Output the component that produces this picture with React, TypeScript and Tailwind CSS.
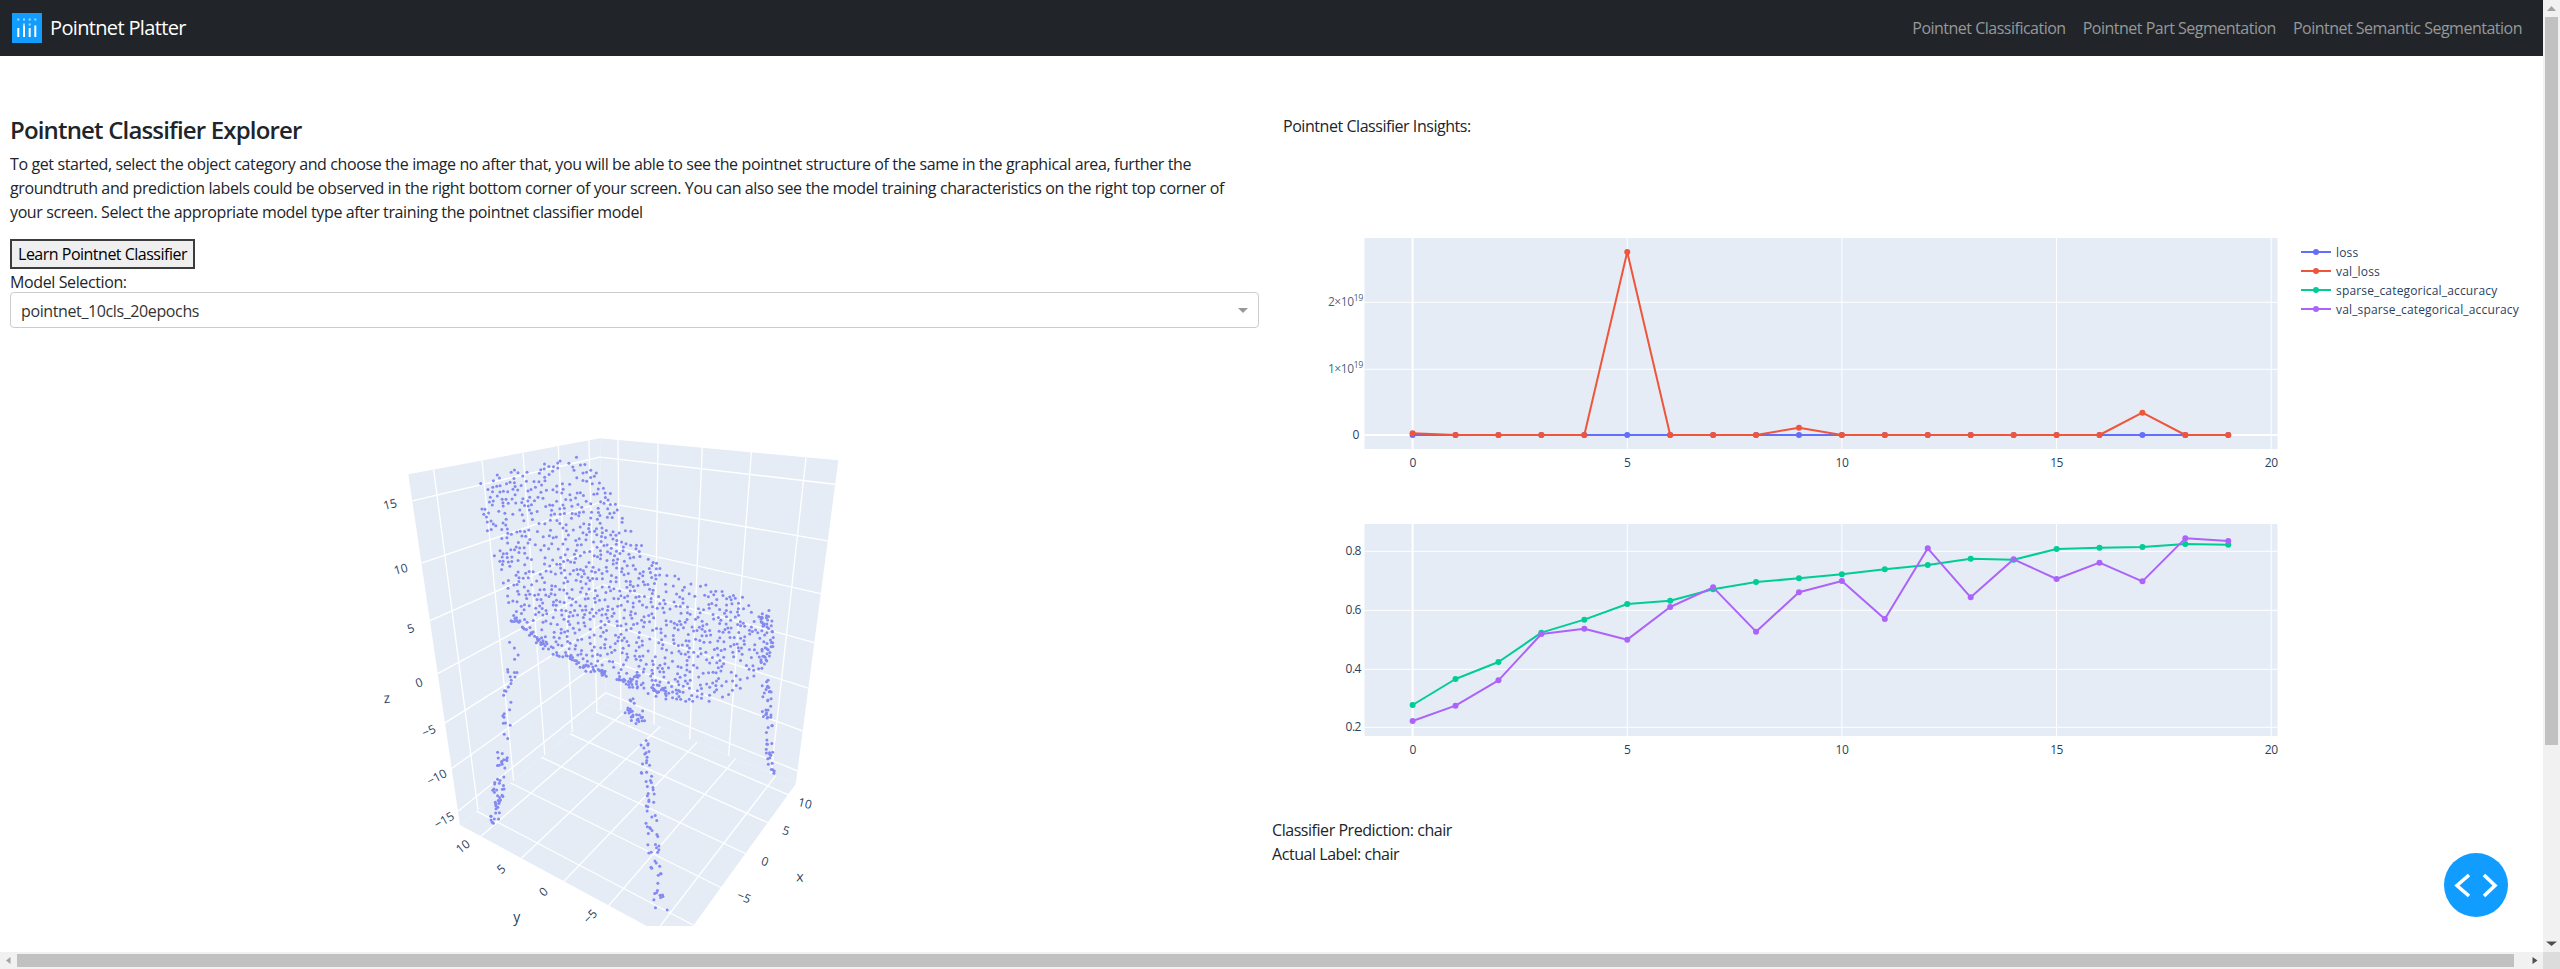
import React from 'react';

type Pt = [number, number];

// plotly default colours
const BLUE = '#636efa';
const RED = '#ef553b';
const GREEN = '#00cc96';
const PURPLE = '#ab63fa';
const TICK = '#2a3f5f';

// zoom crop coords of the 3d plot -> page coords
const crop = (x: number, y: number): Pt => [340 + x / 3, 420 + y / 2.856];

// maps the unit square onto a four cornered wall, keeps the perspective
const quadMap = (p00: Pt, p10: Pt, p11: Pt, p01: Pt) => {
  const [x0, y0] = p00;
  const [x1, y1] = p10;
  const [x2, y2] = p11;
  const [x3, y3] = p01;
  const dx1 = x1 - x2;
  const dx2 = x3 - x2;
  const sx = x0 - x1 + x2 - x3;
  const dy1 = y1 - y2;
  const dy2 = y3 - y2;
  const sy = y0 - y1 + y2 - y3;
  const den = dx1 * dy2 - dx2 * dy1;
  const g = (sx * dy2 - dx2 * sy) / den;
  const h = (dx1 * sy - sx * dy1) / den;
  const a = x1 - x0 + g * x1;
  const b = x3 - x0 + h * x3;
  const d = y1 - y0 + g * y1;
  const e = y3 - y0 + h * y3;
  return (u: number, v: number): Pt => {
    const w = g * u + h * v + 1;
    return [(a * u + b * v + x0) / w, (d * u + e * v + y0) / w];
  };
};

const Y_MAX = 12.3;
const Y_MIN = -12;
const X_MIN = -12.4;
const X_MAX = 12.7;
const Z_MAX = 17;
const Z_MIN = -16.7;
const yu = (y: number) => (Y_MAX - y) / (Y_MAX - Y_MIN);
const xu = (x: number) => (x - X_MIN) / (X_MAX - X_MIN);
const zv = (z: number) => (Z_MAX - z) / (Z_MAX - Z_MIN);

const TL = crop(205, 158);
const BACK_TOP = crop(780, 55);
const TR = crop(1495, 118);
const BL: Pt = [460, 826];
const BACK: Pt = [606, 705];
const BR: Pt = [795.7, 785];
const FRONT: Pt = [680, 945];

const leftWall = quadMap(TL, BACK_TOP, BACK, BL);
const rightWall = quadMap(BACK_TOP, TR, BR, BACK);
const floor = quadMap(BL, BACK, BR, FRONT); // u along y, v along x

const ZS = [15, 10, 5, 0, -5, -10, -15];
const YS = [10, 5, 0, -5, -10];
const XS = [-10, -5, 0, 5, 10];

const gridLines: [Pt, Pt][] = [
  ...ZS.map((z): [Pt, Pt] => [leftWall(0, zv(z)), leftWall(1, zv(z))]),
  ...ZS.map((z): [Pt, Pt] => [rightWall(0, zv(z)), rightWall(1, zv(z))]),
  ...YS.map((y): [Pt, Pt] => [leftWall(yu(y), 0), leftWall(yu(y), 1)]),
  ...XS.map((x): [Pt, Pt] => [rightWall(xu(x), 0), rightWall(xu(x), 1)]),
  ...YS.map((y): [Pt, Pt] => [floor(yu(y), 0), floor(yu(y), 1)]),
  ...XS.map((x): [Pt, Pt] => [floor(0, 1 - xu(x)), floor(1, 1 - xu(x))]),
];

// small seeded random so the cloud stays the same on every load
let seed = 20240;
const rnd = () => {
  seed = (seed * 16807) % 2147483647;
  return seed / 2147483647;
};

const inside = (p: Pt, poly: Pt[]) => {
  let hit = false;
  for (let i = 0, j = poly.length - 1; i < poly.length; j = i++) {
    const [xi, yi] = poly[i];
    const [xj, yj] = poly[j];
    if (yi > p[1] !== yj > p[1] && p[0] < ((xj - xi) * (p[1] - yi)) / (yj - yi) + xi) hit = !hit;
  }
  return hit;
};

const chairOutline: Pt[] = [
  [415, 182], [460, 158], [600, 130], [710, 108], [770, 140], [825, 225], [850, 290], [895, 345],
  [935, 400], [975, 430], [1100, 475], [1220, 510], [1290, 545], [1310, 610], [1295, 680], [1260, 730],
  [1210, 770], [1140, 800], [1080, 812], [970, 800], [880, 770], [780, 735], [720, 715], [640, 665],
  [570, 630], [520, 565], [490, 480], [460, 390], [430, 290],
];

const sampleLine = (pts: Pt[], count: number, jitter: number): Pt[] => {
  const out: Pt[] = [];
  for (let i = 0; i < count; i++) {
    const t = rnd() * (pts.length - 1);
    const k = Math.min(Math.floor(t), pts.length - 2);
    const f = t - k;
    out.push([
      pts[k][0] + (pts[k + 1][0] - pts[k][0]) * f + (rnd() - 0.5) * jitter,
      pts[k][1] + (pts[k + 1][1] - pts[k][1]) * f + (rnd() - 0.5) * jitter * 0.6,
    ]);
  }
  return out;
};

const chairCloud = (): Pt[] => {
  const pts: Pt[] = [];
  // loose spacing, the real cloud has gaps and few overlapping dots
  let tries = 0;
  while (pts.length < 1020 && tries < 60000) {
    tries++;
    const p: Pt = [400 + rnd() * 920, 100 + rnd() * 720];
    if (!inside(p, chairOutline)) continue;
    if (pts.some((q) => Math.hypot(q[0] - p[0], q[1] - p[1]) < 9)) continue;
    pts.push(p);
  }
  pts.push(...sampleLine([[520, 565], [600, 640], [720, 700], [880, 760]], 70, 26));
  pts.push(...sampleLine([[880, 730], [900, 760], [960, 770], [1000, 780]], 30, 40));
  pts.push(...sampleLine([[1270, 560], [1290, 620], [1270, 700]], 30, 34));
  pts.push(...sampleLine([[525, 640], [510, 740], [500, 830], [490, 920], [485, 990], [475, 1060], [470, 1110], [465, 1155]], 75, 36));
  pts.push(...sampleLine([[905, 900], [915, 1000], [930, 1120], [940, 1220], [950, 1300], [965, 1410]], 70, 36));
  pts.push(...sampleLine([[870, 800], [870, 860]], 18, 30));
  pts.push(...sampleLine([[900, 830], [900, 880]], 12, 30));
  pts.push(...sampleLine([[1280, 750], [1280, 830], [1285, 920], [1290, 1015]], 50, 30));
  return pts.map(([x, y]) => crop(x, y));
};

const cloud = chairCloud();

// rotated tick labels of the 3d scene, crop coords
const sceneLabels: { t: string; x: number; y: number; r: number; big?: boolean }[] = [
  { t: '15', x: 150, y: 243, r: -14 },
  { t: '10', x: 182, y: 428, r: -16 },
  { t: '5', x: 212, y: 597, r: -18 },
  { t: '0', x: 237, y: 752, r: -20 },
  { t: '−5', x: 266, y: 890, r: -24 },
  { t: '−10', x: 290, y: 1022, r: -28 },
  { t: '−15', x: 312, y: 1145, r: -30 },
  { t: '10', x: 368, y: 1220, r: -38 },
  { t: '5', x: 483, y: 1285, r: -40 },
  { t: '0', x: 610, y: 1350, r: -42 },
  { t: '−5', x: 750, y: 1420, r: -46 },
  { t: '10', x: 1395, y: 1097, r: 14 },
  { t: '5', x: 1338, y: 1175, r: 16 },
  { t: '0', x: 1275, y: 1263, r: 20 },
  { t: '−5', x: 1212, y: 1365, r: 24 },
  { t: 'z', x: 140, y: 795, r: -6, big: true },
  { t: 'y', x: 530, y: 1420, r: 0, big: true },
  { t: 'x', x: 1380, y: 1305, r: 4, big: true },
];

const Scene3D: React.FC = () => (
  <svg className="block w-[1250px] h-[598px] shrink-0" viewBox="10 329 1250 598">
    <polygon points={[TL, BACK_TOP, BACK, BL].join(' ')} fill="#e5ecf6" />
    <polygon points={[BACK_TOP, TR, BR, BACK].join(' ')} fill="#e5ecf6" />
    <polygon points={[BL, BACK, BR, FRONT].join(' ')} fill="#e5ecf6" />
    {gridLines.map(([a, b], i) => (
      <line key={i} x1={a[0]} y1={a[1]} x2={b[0]} y2={b[1]} stroke="#ffffff" strokeWidth={1.3} />
    ))}
    {cloud.map(([x, y], i) => (
      <circle key={i} cx={x} cy={y} r={1.5} fill="#8389f0" />
    ))}
    {sceneLabels.map((l, i) => {
      const [x, y] = crop(l.x, l.y);
      return (
        <text
          key={i}
          x={x}
          y={y}
          fill={TICK}
          fontSize={l.big ? 14 : 12}
          textAnchor="middle"
          dominantBaseline="central"
          transform={`rotate(${l.r} ${x} ${y})`}
        >
          {l.t}
        </text>
      );
    })}
  </svg>
);

const xPx = (i: number) => 1412.6 + i * 42.93;
const EPOCHS = Array.from({ length: 20 }, (_, i) => i);

const lossY = EPOCHS.map(() => 435);
const valLossY = EPOCHS.map((i) => {
  if (i === 0) return 433.3;
  if (i === 5) return 252;
  if (i === 9) return 427.7;
  if (i === 17) return 412.7;
  return 435;
});
const toPage2 = (v: number) => 510 + v / 3;
const accY = [585, 507, 456, 368, 329, 282, 272, 238, 216, 205, 193, 178, 165, 146, 149, 117, 113, 111, 102, 104].map(toPage2);
const valAccY = [633, 587, 511, 372, 356, 389, 291, 232, 365, 247, 213, 327, 115, 262, 148, 207, 158, 214, 85, 93].map(toPage2);

const Trace: React.FC<{ ys: number[]; color: string }> = ({ ys, color }) => (
  <g>
    <polyline
      points={ys.map((y, i) => `${xPx(i)},${y}`).join(' ')}
      fill="none"
      stroke={color}
      strokeWidth={2}
      strokeLinejoin="round"
    />
    {ys.map((y, i) => (
      <circle key={i} cx={xPx(i)} cy={y} r={3} fill={color} />
    ))}
  </g>
);

const XAxis: React.FC<{ top: number; bottom: number }> = ({ top, bottom }) => (
  <g>
    {[0, 5, 10, 15, 20].map((v) => (
      <g key={v}>
        <line x1={xPx(v)} x2={xPx(v)} y1={top} y2={bottom} stroke="#ffffff" strokeWidth={v === 0 ? 2 : 1} />
        <text x={xPx(v)} y={bottom + 18} fill={TICK} fontSize={12} textAnchor="middle">
          {v}
        </text>
      </g>
    ))}
  </g>
);

const legend = [
  { name: 'loss', color: BLUE, y: 252 },
  { name: 'val_loss', color: RED, y: 271 },
  { name: 'sparse_categorical_accuracy', color: GREEN, y: 290 },
  { name: 'val_sparse_categorical_accuracy', color: PURPLE, y: 309 },
];

const TrainingCharts: React.FC = () => (
  <svg className="block w-[1271px] h-[679px] shrink-0" viewBox="1272 138 1271 679">
    {/* loss */}
    <rect x={1364.5} y={238} width={913} height={211} fill="#e5ecf6" />
    <XAxis top={238} bottom={449} />
    {[
      { y: 369.3, label: '1×10' },
      { y: 302.3, label: '2×10' },
    ].map((t) => (
      <g key={t.label}>
        <line x1={1364.5} x2={2277.5} y1={t.y} y2={t.y} stroke="#ffffff" />
        <text x={1363} y={t.y + 4} fill={TICK} fillOpacity={0.85} fontSize={12} textAnchor="end">
          {t.label}
          <tspan dy={-5} fontSize={9}>
            19
          </tspan>
        </text>
      </g>
    ))}
    <line x1={1364.5} x2={2277.5} y1={435} y2={435} stroke="#ffffff" strokeWidth={2} />
    <text x={1359} y={439} fill={TICK} fontSize={12} textAnchor="end">
      0
    </text>
    <Trace ys={lossY} color={BLUE} />
    <Trace ys={valLossY} color={RED} />

    {legend.map((l) => (
      <g key={l.name}>
        <line x1={2301} x2={2331} y1={l.y} y2={l.y} stroke={l.color} strokeWidth={2} />
        <circle cx={2316} cy={l.y} r={3} fill={l.color} />
        <text x={2336} y={l.y + 5} fill={TICK} fontSize={12} letterSpacing={0.16}>
          {l.name}
        </text>
      </g>
    ))}

    {/* accuracy */}
    <rect x={1364.5} y={524} width={913} height={212} fill="#e5ecf6" />
    <XAxis top={524} bottom={736} />
    {[
      { y: 551.3, label: '0.8' },
      { y: 610.3, label: '0.6' },
      { y: 669.3, label: '0.4' },
      { y: 727.3, label: '0.2' },
    ].map((t) => (
      <g key={t.label}>
        <line x1={1364.5} x2={2277.5} y1={t.y} y2={t.y} stroke="#ffffff" />
        <text x={1361} y={t.y + 4} fill={TICK} fontSize={12} textAnchor="end">
          {t.label}
        </text>
      </g>
    ))}
    <Trace ys={accY} color={GREEN} />
    <Trace ys={valAccY} color={PURPLE} />
  </svg>
);

const PlotlyLogo: React.FC = () => (
  <svg className="block w-[30px] h-[30px] shrink-0" viewBox="0 0 30 30">
    <rect width={30} height={30} fill="#119dff" />
    {[6.3, 12, 17.7, 23.3].map((x) => (
      <rect key={x} x={x - 1} y={5.5} width={2} height={2} fill="#a8dcff" />
    ))}
    {[12, 17.7].map((x) => (
      <rect key={x} x={x - 1} y={10.5} width={2} height={2} fill="#a8dcff" />
    ))}
    <rect x={5.3} y={15} width={2} height={9} fill="#ffffff" />
    <rect x={11} y={12.5} width={2} height={11.5} fill="#ffffff" />
    <rect x={16.7} y={15} width={2} height={9} fill="#ffffff" />
    <rect x={22.3} y={12.5} width={2} height={11.5} fill="#ffffff" />
  </svg>
);

const Navbar: React.FC = () => (
  <nav className="h-14 shrink-0 bg-[#212529] flex items-center justify-between pl-3 pr-[21px]">
    <div className="flex items-center gap-2">
      <PlotlyLogo />
      <span className="text-[20px] text-white tracking-[-0.65px]">Pointnet Platter</span>
    </div>
    <div className="flex items-center gap-[17px] text-[16px] text-[#96989a] tracking-[-0.5px]">
      <a>Pointnet Classification</a>
      <a>Pointnet Part Segmentation</a>
      <a>Pointnet Semantic Segmentation</a>
    </div>
  </nav>
);

const Explorer: React.FC = () => (
  <div className="w-[1272px] shrink-0 pl-[10px] pt-[59px] flex flex-col items-start">
    <h4 className="text-[24px] leading-[29px] font-semibold text-[#212529] tracking-[-0.83px] mb-2">
      Pointnet Classifier Explorer
    </h4>
    <p className="text-[16px] leading-6 text-[#212529] tracking-[-0.385px] whitespace-nowrap">
      <span className="block">
        To get started, select the object category and choose the image no after that, you will be able to see the pointnet structure of the same in the graphical area, further the
      </span>
      <span className="block">
        groundtruth and prediction labels could be observed in the right bottom corner of your screen. You can also see the model training characteristics on the right top corner of
      </span>
      <span className="block">
        your screen. Select the appropriate model type after training the pointnet classifier model
      </span>
    </p>
    <button className="mt-[15px] h-[30px] w-[185px] border-2 border-[#3c3c3c] bg-[#efefef] text-[16px] text-black tracking-[-0.5px] flex items-center justify-center">
      Learn Pointnet Classifier
    </button>
    <label className="text-[16px] leading-[24px] h-[24px] mt-px -mb-[2px] text-[#212529] tracking-[-0.385px]">Model Selection:</label>
    <div className="relative w-[1249px] h-9 shrink-0 border border-[#cccccc] rounded bg-white flex items-center pl-[10px] pt-0.5 text-[16px] text-[#333333] tracking-[-0.385px]">
      pointnet_10cls_20epochs
      <svg className="absolute right-[10px] top-[15px] w-[10px] h-[5px]" viewBox="0 0 10 5">
        <path d="M0 0h10L5 5z" fill="#999999" />
      </svg>
    </div>
    <Scene3D />
  </div>
);

const Insights: React.FC = () => (
  <div className="flex-1 pt-[58px] flex flex-col text-[16px] leading-6 text-[#212529] tracking-[-0.45px]">
    <div className="pl-[11px] h-6">Pointnet Classifier Insights:</div>
    <TrainingCharts />
    <div className="mt-px">Classifier Prediction: chair</div>
    <div>Actual Label: chair</div>
  </div>
);

const DebugButton: React.FC = () => (
  <div className="absolute left-[2444px] top-[853px] w-16 h-16 rounded-full bg-[#119dff]">
    <svg className="block w-16 h-16" viewBox="0 0 64 64">
      <path d="M25 22 13 32.5 25 43M40 22l11 10.5L40 43" fill="none" stroke="#ffffff" strokeWidth={3.6} />
    </svg>
  </div>
);

const Arrow: React.FC<{ d: string; color: string }> = ({ d, color }) => (
  <svg className="block w-[17px] h-[17px] shrink-0" viewBox="0 0 17 17">
    <path d={d} fill={color} />
  </svg>
);

export default function App() {
  return (
    <div className="relative w-[2560px] h-[969px] overflow-hidden bg-white flex font-['Open_Sans',sans-serif]">
      <div className="w-[2543px] shrink-0 flex flex-col">
        <Navbar />
        <main className="flex-1 min-h-0 flex overflow-hidden">
          <Explorer />
          <Insights />
        </main>
        <div className="h-[17px] shrink-0 bg-[#f1f1f1] flex">
          <Arrow d="M10.5 5v7L6 8.5z" color="#a3a3a3" />
          <div className="w-[2497px] h-[13px] mt-0.5 bg-[#c1c1c1]" />
          <div className="flex-1" />
          <Arrow d="M6.5 5v7l5-3.5z" color="#505050" />
        </div>
      </div>
      <div className="w-[17px] shrink-0 bg-[#f1f1f1] flex flex-col">
        <Arrow d="M8.5 6 13 11H4z" color="#a3a3a3" />
        <div className="h-[728px] mx-0.5 bg-[#c1c1c1]" />
        <div className="flex-1" />
        <Arrow d="M3 6.5h11L8.5 11z" color="#505050" />
        <div className="h-[17px] bg-[#dcdcdc]" />
      </div>
      <DebugButton />
    </div>
  );
}
